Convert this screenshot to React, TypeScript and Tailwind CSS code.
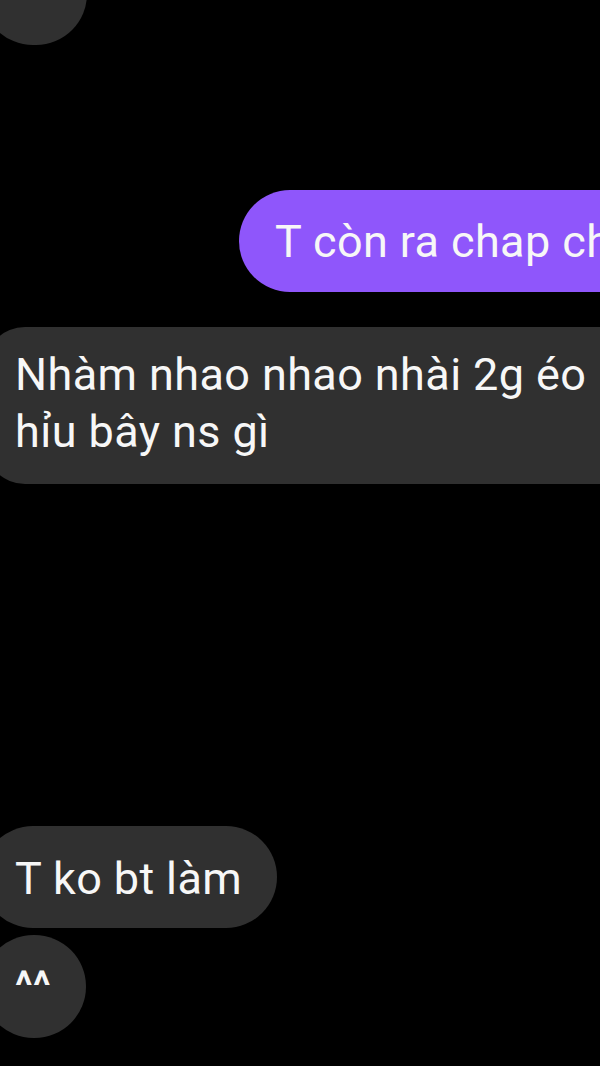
import React from "react";

const font = { fontFamily: "Roboto, 'Noto Sans', sans-serif" };

export default function App() {
  return (
    <div
      className="w-[600px] h-[1066px] bg-black overflow-hidden flex flex-col text-[45px] leading-[57px] tracking-[0.4px] text-[#f7f7f7]"
      style={font}
    >
      <div className="mt-[-57px] ml-[-18px] h-[102px] w-[105px] rounded-full bg-[#303030] shrink-0" />

      <div className="mt-[145px] ml-[239px] self-start h-[102px] flex items-center rounded-full bg-[#8f56fb] pl-[36px] pr-[40px] whitespace-nowrap shrink-0">
        T còn ra chap chưa
      </div>

      <div className="mt-[35px] ml-[-15px] mr-[-40px] rounded-[40px] bg-[#303030] pl-[30px] pr-[40px] pt-[19px] pb-[24px] shrink-0 whitespace-nowrap">
        <div>Nhàm nhao nhao nhài 2g éo</div>
        <div>hỉu bây ns gì</div>
      </div>

      <div className="mt-[342px] ml-[-18px] self-start h-[102px] flex items-center rounded-full bg-[#303030] pl-[33px] pr-[35px] pt-[3px] whitespace-nowrap shrink-0">
        T ko bt làm
      </div>

      <div className="mt-[7px] ml-[-18px] self-start h-[103px] flex items-center rounded-full bg-[#303030] pl-[33px] pr-[35px] whitespace-nowrap shrink-0">
        <span className="font-bold text-[40px]">^^</span>
      </div>
    </div>
  );
}
